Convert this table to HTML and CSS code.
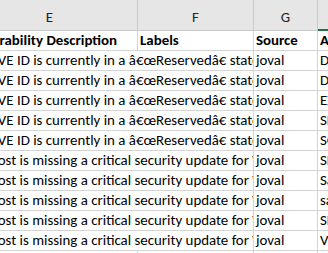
FILE: index.html
```html
<!DOCTYPE html>
<html>
<head>
<meta charset="utf-8">
<link rel="stylesheet" href="styles.css">
</head>
<body>
<div class="sheet">
  <div class="grid">
    <div class="ch">E</div>
    <div class="ch">F</div>
    <div class="ch">G</div>
    <div class="ch sel">H</div>

    <div class="c b">Vulnerability Description</div>
    <div class="c b">Labels</div>
    <div class="c b">Source</div>
    <div class="c b">Asset Name</div>

    <div class="c span">The CVE ID is currently in a â€œReservedâ€ state in the NVD</div>
    <div class="c">joval</div>
    <div class="c">DESKTOP-01</div>

    <div class="c span">The CVE ID is currently in a â€œReservedâ€ state in the NVD</div>
    <div class="c">joval</div>
    <div class="c">DC01</div>

    <div class="c span">The CVE ID is currently in a â€œReservedâ€ state in the NVD</div>
    <div class="c">joval</div>
    <div class="c">EXCH01</div>

    <div class="c span">The CVE ID is currently in a â€œReservedâ€ state in the NVD</div>
    <div class="c">joval</div>
    <div class="c">SRV-APP01</div>

    <div class="c span">The CVE ID is currently in a â€œReservedâ€ state in the NVD</div>
    <div class="c">joval</div>
    <div class="c">SQL01</div>

    <div class="c span">The host is missing a critical security update for Windows</div>
    <div class="c">joval</div>
    <div class="c">SRV-WEB02</div>

    <div class="c span">The host is missing a critical security update for Windows</div>
    <div class="c">joval</div>
    <div class="c">Sales-PC</div>

    <div class="c span">The host is missing a critical security update for Windows</div>
    <div class="c">joval</div>
    <div class="c">sales-lt</div>

    <div class="c span">The host is missing a critical security update for Windows</div>
    <div class="c">joval</div>
    <div class="c">SEC-01</div>

    <div class="c span">The host is missing a critical security update for Windows</div>
    <div class="c">joval</div>
    <div class="c">VM-HOST</div>

    <div class="c"></div>
    <div class="c"></div>
    <div class="c"></div>
    <div class="c"></div>
  </div>
</div>
</body>
</html>
```
FILE: styles.css
```css
html, body {
  margin: 0;
  padding: 0;
  background: #ffffff;
}
.sheet {
  width: 328px;
  height: 253px;
  overflow: hidden;
}
.grid {
  display: grid;
  grid-template-columns: 176px 116px 64px 120px;
  grid-auto-rows: 20px;
  grid-template-rows: 31px;
  margin-left: -38px;
  width: 476px;
  font-family: Carlito, Lato, "Liberation Sans", sans-serif;
  font-size: 14.9px;
  color: #000;
}
.ch {
  background: #e6e6e6;
  border-right: 1px solid #c8c8c8;
  border-bottom: 1px solid #c8c8c8;
  display: flex;
  align-items: flex-end;
  justify-content: center;
  padding-bottom: 5px;
  line-height: 16px;
  color: #222;
  overflow: hidden;
}
.ch.sel {
  border-bottom: 2px solid #217346;
  padding-bottom: 4px;
}
.c {
  border-right: 1px solid #d4d4d4;
  border-bottom: 1px solid #d4d4d4;
  display: flex;
  align-items: flex-end;
  padding: 0 1px 1px 2px;
  line-height: 17px;
  white-space: nowrap;
  overflow: hidden;
  min-width: 0;
}
.c.span {
  grid-column: span 2;
}
.b {
  font-weight: bold;
}
```
